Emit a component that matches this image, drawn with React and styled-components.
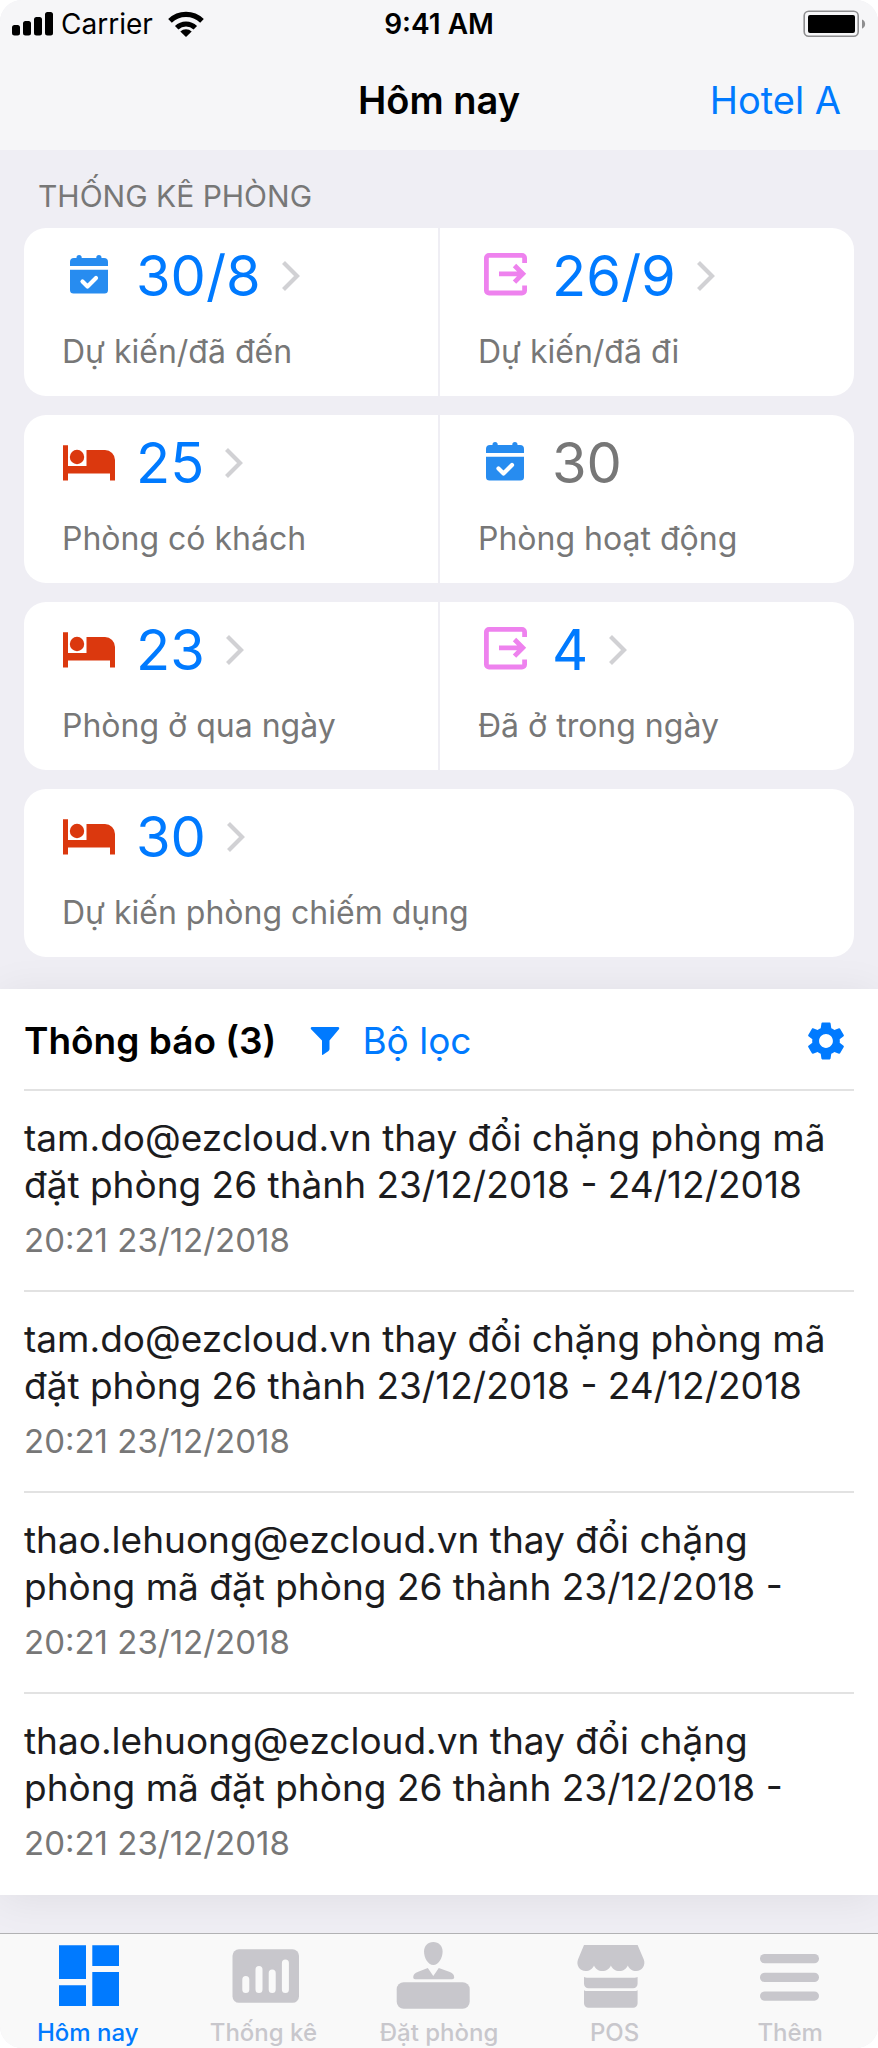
import React, { useState } from 'react'
import styled, { createGlobalStyle } from 'styled-components'
import { MdSettings } from 'react-icons/md'

const stats = [
    [
        { icon: "calendar", value: "30/8", label: "Dự kiến/đã đến", link: true },
        { icon: "exit", value: "26/9", label: "Dự kiến/đã đi", link: true },
    ],
    [
        { icon: "bed", value: "25", label: "Phòng có khách", link: true },
        { icon: "calendar", value: "30", label: "Phòng hoạt động", link: false },
    ],
    [
        { icon: "bed", value: "23", label: "Phòng ở qua ngày", link: true },
        { icon: "exit", value: "4", label: "Đã ở trong ngày", link: true },
    ],
    [
        { icon: "bed", value: "30", label: "Dự kiến phòng chiếm dụng", link: true },
    ],
];

const notices = [
    { id: 1, text: "tam.do@ezcloud.vn thay đổi chặng phòng mã đặt phòng 26 thành 23/12/2018 - 24/12/2018", time: "20:21 23/12/2018" },
    { id: 2, text: "tam.do@ezcloud.vn thay đổi chặng phòng mã đặt phòng 26 thành 23/12/2018 - 24/12/2018", time: "20:21 23/12/2018" },
    { id: 3, text: "thao.lehuong@ezcloud.vn thay đổi chặng phòng mã đặt phòng 26 thành 23/12/2018 -", time: "20:21 23/12/2018" },
    { id: 4, text: "thao.lehuong@ezcloud.vn thay đổi chặng phòng mã đặt phòng 26 thành 23/12/2018 -", time: "20:21 23/12/2018" },
];

const tabs = [
    { id: "home", label: "Hôm nay" },
    { id: "report", label: "Thống kê" },
    { id: "booking", label: "Đặt phòng" },
    { id: "pos", label: "POS" },
    { id: "more", label: "Thêm" },
];

const StatIcon = ({ name }) => (
    <svg width="54" height="48" viewBox="0 0 54 48" aria-hidden="true">
        {name === "calendar" && (
            <g fill="#278cf0">
                <path d="M8 14V10a4 4 0 0 1 4-4h2.500V5.500a2.600 2.600 0 0 1 5.200 0V6h14.600V5.500a2.600 2.600 0 0 1 5.200 0V6H42a4 4 0 0 1 4 4v4z" />
                <path d="M8 17.800h38V38a3.500 3.500 0 0 1-3.500 3.500h-31A3.500 3.500 0 0 1 8 38z" />
                <path d="M20.500 29.500l5 5 8.500-8.500" fill="none" stroke="#fff" strokeWidth="4.200" strokeLinecap="round" strokeLinejoin="round" />
            </g>
        )}
        {name === "exit" && (
            <g fill="none" stroke="#ee82ee" strokeWidth="4.800">
                <path d="M46.600 11V6a2.600 2.600 0 0 0-2.600-2.600H11A2.600 2.600 0 0 0 8.400 6v32.400A2.600 2.600 0 0 0 11 41h33a2.600 2.600 0 0 0 2.600-2.600V33.500" />
                <path d="M21 21.800h22M36.500 13.500l8.300 8.300-8.300 8.300" />
            </g>
        )}
        {name === "bed" && (
            <g fill="#db380e">
                <path d="M1 6.300h5V27h18.500V11H43a10 10 0 0 1 10 10v20.500h-5V34.500H6v7H1z" />
                <circle cx="15" cy="18" r="7.200" />
            </g>
        )}
    </svg>
)

const Chevron = () => (
    <svg width="20" height="32" viewBox="0 0 20 32" fill="none" stroke="#d1d1d4" strokeWidth="4.200" aria-hidden="true">
        <path d="M2.500 2.500L16 16 2.500 29.500" />
    </svg>
)

const TabIcon = ({ name }) => (
    <svg width="88" height="70" viewBox="-6 0 88 70" fill="currentColor" aria-hidden="true">
        {name === "home" && <path d="M9 5.300h27V39H9zM9 45.300h27V66H9zM42.300 5.300H69V26H42.300zM42.300 32H69v34H42.300z" />}
        {name === "report" && (
            <>
                <rect x="7.500" y="9.300" width="66.500" height="53.500" rx="6.500" />
                <g stroke="#f9f9f9" strokeWidth="7" strokeLinecap="round">
                    <path d="M20.800 39.500v10M34 29.500v20M47.200 33v16.500M60.400 23v26.500" />
                </g>
            </>
        )}
        {name === "booking" && (
            <>
                <rect x="-4.300" y="42.300" width="73" height="26.500" rx="7" />
                <path d="M32.300 2c5.500 0 9.300 4 9.300 9.500 0 6-3.800 13.500-9.300 13.500S23 17.500 23 11.500C23 6 26.800 2 32.300 2z" />
                <path d="M26.800 28l5.500 8 5.500-8 10.400 3.800c3.400 1.300 5 3 5 5.400 0 1.200-.8 2-2 2H14.200c-1.200 0-2-.8-2-2 0-2.400 1.600-4.100 5-5.400z" />
            </>
        )}
        {name === "pos" && (
            <>
                <path d="M7 5h53.600l6.200 14.500c2.200 5.800-2 11.600-7.600 11.600-4 0-7-2.300-8.400-5.700-1.400 3.400-4.600 5.700-8.500 5.700s-7-2.300-8.400-5.700c-1.400 3.400-4.600 5.700-8.500 5.700s-7-2.300-8.400-5.700c-1.400 3.400-4.600 5.700-8.400 5.700-5.800 0-9.800-5.800-7.600-11.600z" />
                <path d="M7 37c1 .6 2 .8 3 .8h47.600c1 0 2-.2 3-.8v6.800a4.500 4.500 0 0 1-4.500 4.500H11.500A4.500 4.500 0 0 1 7 43.800z" />
                <path d="M7 50.200c1 .6 2 .9 3 .9h47.600c1 0 2-.3 3-.9v13a4.500 4.500 0 0 1-4.500 4.500H11.500A4.500 4.500 0 0 1 7 63.200z" />
            </>
        )}
        {name === "more" && (
            <>
                <rect x="8" y="14" width="59" height="9.300" rx="4.600" />
                <rect x="8" y="32.700" width="59" height="9.300" rx="4.600" />
                <rect x="8" y="51.400" width="59" height="9.300" rx="4.600" />
            </>
        )}
    </svg>
)

const App = () => {
    const [activeTab, setActiveTab] = useState("home");

    return (
        <>
            <GlobalStyle />
            <StPage>
                <StHeader>
                    <StStatusBar>
                        <StCarrier>
                            <svg width="42" height="24" viewBox="0 0 42 24" aria-hidden="true">
                                <rect x="0" y="13" width="8" height="10.500" rx="2.500" />
                                <rect x="11" y="9" width="8" height="14.500" rx="2.500" />
                                <rect x="22" y="5" width="8" height="18.500" rx="2.500" />
                                <rect x="33" y="0" width="8" height="23.500" rx="2.500" />
                            </svg>
                            <span>Carrier</span>
                            <svg width="36" height="28" viewBox="0 0 36 28" aria-hidden="true">
                                <path d="M18 27l-5.700-5.600a8.300 8.300 0 0 1 11.400 0z" />
                                <path d="M8.700 17.800a13.300 13.300 0 0 1 18.600 0" fill="none" stroke="#000" strokeWidth="5" />
                                <path d="M2 10.800a23 23 0 0 1 32 0" fill="none" stroke="#000" strokeWidth="5.200" />
                            </svg>
                        </StCarrier>
                        <StTime>9:41 AM</StTime>
                        <StBattery width="64" height="28" viewBox="0 0 64 28" aria-hidden="true">
                            <rect x="2.200" y="1.200" width="54" height="25" rx="4.500" fill="none" stroke="#8e8e90" strokeWidth="1.600" />
                            <rect x="6" y="5" width="47" height="18" rx="2" />
                            <path d="M60 9.500c4.200 1.500 4.200 7.700 0 9.200z" fill="#8e8e90" />
                        </StBattery>
                    </StStatusBar>
                    <StNav>
                        <StTitle>Hôm nay</StTitle>
                        <StHotelBtn type="button">Hotel A</StHotelBtn>
                    </StNav>
                </StHeader>

                <StStats>
                    <StSectionTitle>THỐNG KÊ PHÒNG</StSectionTitle>
                    {stats.map((cells, index) => (
                        <StCard key={index}>
                            {cells.map(cell => (
                                <StCell key={cell.label} as={cell.link ? "button" : "div"} type={cell.link ? "button" : undefined}>
                                    <StValueRow>
                                        <StatIcon name={cell.icon} />
                                        <StValue $muted={!cell.link}>{cell.value}</StValue>
                                        {cell.link && <Chevron />}
                                    </StValueRow>
                                    <StLabel>{cell.label}</StLabel>
                                </StCell>
                            ))}
                        </StCard>
                    ))}
                </StStats>

                <StPanel>
                    <StPanelHead>
                        <StPanelTitle>Thông báo (3)</StPanelTitle>
                        <StFilterBtn type="button">
                            <svg width="30" height="30" viewBox="0 0 30 30" fill="currentColor" aria-hidden="true">
                                <path d="M2 1h26c1.200 0 1.700 1.300.9 2.200L19.500 14.500V23c0 .8-.4 1.400-1 1.900L13 28.700c-.6.400-1 .2-1-.5V14.500L1.100 3.200C.3 2.300.8 1 2 1z" />
                            </svg>
                            Bộ lọc
                        </StFilterBtn>
                        <StSettingBtn type="button" aria-label="Cài đặt">
                            <MdSettings size={46} />
                        </StSettingBtn>
                    </StPanelHead>
                    <StList>
                        {notices.map(notice => (
                            <StItem key={notice.id}>
                                <StText>{notice.text}</StText>
                                <StDate>{notice.time}</StDate>
                            </StItem>
                        ))}
                    </StList>
                </StPanel>

                <StTabBar>
                    {tabs.map(tab => (
                        <StTab key={tab.id} type="button" $active={tab.id === activeTab} onClick={() => setActiveTab(tab.id)}>
                            <TabIcon name={tab.id} />
                            {tab.label}
                        </StTab>
                    ))}
                </StTabBar>
            </StPage>
        </>
    )
}

export default App

const GlobalStyle = createGlobalStyle`
    * {
        box-sizing: border-box;
    }
    body {
        margin: 0;
        background-color: white;
        font-family: Inter, "Noto Sans", sans-serif;
    }
    h1, h2, p, ul {
        margin: 0;
        padding: 0;
    }
    button {
        border: none;
        padding: 0;
        background: none;
        font-family: inherit;
        cursor: pointer;
    }
    svg {
        display: block;
        flex-shrink: 0;
    }
`;

const StPage = styled.div`
    min-height: 100vh;
    display: flex;
    flex-direction: column;
    background-color: #efeef4;
    border-radius: 22px;
    overflow: hidden;
`;

const StHeader = styled.header`
    background-color: #f6f6f8;
`;

const StStatusBar = styled.div`
    height: 48px;
    padding: 0 12px;
    display: grid;
    grid-template-columns: 1fr auto 1fr;
    align-items: center;
`;

const StCarrier = styled.div`
    display: flex;
    align-items: center;
    gap: 7px;
    font-size: 28px;
    span {
        margin-right: 8px;
    }
`;

const StTime = styled.span`
    font-size: 28px;
    font-weight: 600;
`;

const StBattery = styled.svg`
    justify-self: end;
`;

const StNav = styled.div`
    height: 102px;
    padding: 2px 37px 0;
    display: grid;
    grid-template-columns: 1fr auto 1fr;
    align-items: center;
`;

const StTitle = styled.h1`
    grid-column: 2;
    font-size: 38px;
    font-weight: 600;
`;

const StHotelBtn = styled.button`
    justify-self: end;
    font-size: 38px;
    color: #007aff;
`;

const StStats = styled.section`
    padding: 24px 24px 32px;
    display: flex;
    flex-direction: column;
    gap: 19px;
`;

const StSectionTitle = styled.h2`
    height: 35px;
    padding-left: 14px;
    font-size: 30px;
    font-weight: 400;
    line-height: 44px;
    color: #777;
`;

const StCard = styled.div`
    display: flex;
    border-radius: 22px;
    background-color: white;
`;

const StCell = styled.div`
    flex: 1;
    padding: 18px 38px 24px;
    text-align: left;
    & + & {
        border-left: 2px solid #efeef4;
    }
`;

const StValueRow = styled.div`
    height: 60px;
    display: flex;
    align-items: center;
    gap: 20px;
`;

const StValue = styled.span`
    font-size: 56px;
    color: ${props => props.$muted ? "#777" : "#007aff"};
`;

const StLabel = styled.p`
    margin-top: 26px;
    font-size: 32px;
    line-height: 40px;
    color: #777;
`;

const StPanel = styled.section`
    padding: 0 24px;
    background-color: white;
    box-shadow: 0 4px 40px rgba(0, 0, 0, 0.07);
`;

const StPanelHead = styled.div`
    height: 102px;
    padding-top: 3px;
    display: flex;
    align-items: center;
    border-bottom: 2px solid #e2e2e2;
`;

const StPanelTitle = styled.h2`
    font-size: 37px;
    font-weight: 600;
`;

const StFilterBtn = styled.button`
    margin-left: 34px;
    display: flex;
    align-items: center;
    gap: 22px;
    font-size: 37px;
    color: #007aff;
`;

const StSettingBtn = styled.button`
    margin-left: auto;
    padding-right: 5px;
    color: #007aff;
`;

const StList = styled.ul`
    list-style: none;
`;

const StItem = styled.li`
    padding: 23px 0 30px;
    border-bottom: 2px solid #e2e2e2;
    &:last-child {
        border-bottom-color: transparent;
    }
`;

const StText = styled.p`
    font-size: 37px;
    line-height: 47px;
    color: #1c1c1e;
`;

const StDate = styled.p`
    margin-top: 12px;
    font-size: 33px;
    line-height: 40px;
    color: #777;
`;

const StTabBar = styled.nav`
    position: relative;
    margin-top: auto;
    padding-top: 6px;
    display: flex;
    background-color: #f9f9f9;
    border-top: 1px solid #b2b2b4;
`;

const StTab = styled.button`
    flex: 1;
    display: flex;
    flex-direction: column;
    align-items: center;
    gap: 8px;
    font-size: 24px;
    font-weight: 500;
    line-height: 30px;
    color: ${props => props.$active ? "#007aff" : "#c8c7cc"};
`;
